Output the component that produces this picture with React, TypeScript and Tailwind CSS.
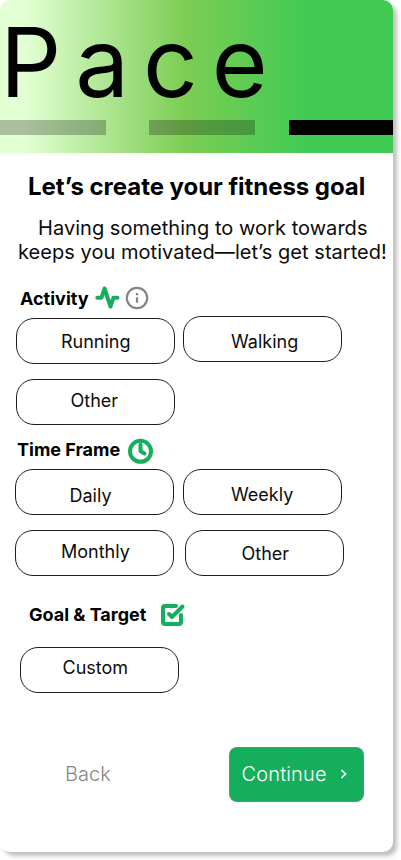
/**
 * Goal setup – last step of the Pace onboarding
 */
import type { ReactNode } from "react";
import clsx from "clsx";

function Pill({ children, className }: { children: ReactNode; className?: string }) {
  return (
    <button
      className={clsx(
        "flex items-start w-[159px] h-[46px] shrink-0 rounded-[18px] border border-[#1e1e1e] bg-white text-[18px] leading-[22px] text-[#0c0c0c]",
        className,
      )}
    >
      {children}
    </button>
  );
}

function ActivityIcon() {
  return (
    <svg className="w-6 h-6 shrink-0 overflow-visible" viewBox="0 0 24 24" fill="none" stroke="#14AE5C" strokeWidth="4" strokeLinecap="round" strokeLinejoin="round">
      <path d="M22.5 11.7h-4l-3 9L9.5 2.5l-3 9.2H2.3" />
    </svg>
  );
}

function InfoIcon() {
  return (
    <svg className="w-6 h-6 shrink-0" viewBox="0 0 24 24" fill="none" stroke="#868686" strokeWidth="2.2">
      <circle cx="12" cy="12" r="10.2" />
      <path d="M12 16.7v-5.4M12 9.3V7" />
    </svg>
  );
}

function ClockIcon() {
  return (
    <svg className="w-[26px] h-[26px] shrink-0" viewBox="0 0 26 26" fill="none" stroke="#14AE5C" strokeWidth="4" strokeLinecap="round" strokeLinejoin="round">
      <circle cx="12.5" cy="13.3" r="10.5" />
      <path d="M12.5 6.8v6.5l4 2.2" />
    </svg>
  );
}

function CheckSquareIcon() {
  return (
    <svg className="w-6 h-6 shrink-0 overflow-visible" viewBox="0 0 24 24" fill="none" stroke="#14AE5C" strokeWidth="4" strokeLinecap="round" strokeLinejoin="round">
      <path d="M9 11l3 3L22.5 3.5" />
      <path d="M21 12v7a2 2 0 0 1-2 2H5a2 2 0 0 1-2-2V5a2 2 0 0 1 2-2h11" />
    </svg>
  );
}

export default function App() {
  return (
    <div className="w-[401px] h-[860px] overflow-hidden bg-white font-['Inter',sans-serif] text-black">
      <div className="w-[393px] h-[852px] flex flex-col overflow-hidden rounded-[10px] bg-white shadow-[4px_4px_4px_rgba(0,0,0,0.25)]">
        {/* Brand header with step progress */}
        <header className="h-[153px] shrink-0 bg-[linear-gradient(90deg,#e3ffd4_6%,#7ccd54_47%,#40ca53_79%)]">
          <h1 className="h-[120px] pt-1 whitespace-nowrap text-[96px] leading-[116px] tracking-[13.9px]">Pace</h1>
          <div className="flex h-[15px]">
            <span className="w-[106px] bg-black/25" />
            <span className="ml-[43px] w-[106px] bg-black/25" />
            <span className="ml-[34px] w-[104px] bg-black" />
          </div>
        </header>

        <h2 className="mt-[19px] pl-[28px] whitespace-nowrap text-2xl leading-[29px] font-bold tracking-[-0.05px]">Let’s create your fitness goal</h2>
        <p className="mt-[15px] -mr-4 whitespace-nowrap text-xl leading-6 tracking-[0.04px] text-[#0c0c0c]">
          <span className="block pl-[38px]">Having something to work towards</span>
          <span className="block pl-[18px]">keeps you motivated—let’s get started!</span>
        </p>

        {/* Activity */}
        <div className="mt-[22px] flex h-6 items-center pl-5">
          <h3 className="pt-px text-[18px] leading-[22px] font-bold">Activity</h3>
          <span className="ml-[6px] flex gap-[6px]">
            <ActivityIcon />
            <InfoIcon />
          </span>
        </div>
        <div className="mt-[6px] flex items-end gap-2 pl-4">
          <Pill className="pl-[44px] pt-[12px]">Running</Pill>
          <Pill className="mb-[2px] pl-[47px] pt-[14px]">Walking</Pill>
        </div>
        <div className="mt-[15px] pl-4">
          <Pill className="pl-[53.5px] pt-[10px]">Other</Pill>
        </div>

        {/* Time frame */}
        <div className="mt-[13px] flex h-[26px] items-center pl-[17px]">
          <h3 className="pb-0.5 text-[18px] leading-[22px] font-bold">Time Frame</h3>
          <span className="ml-[8px]">
            <ClockIcon />
          </span>
        </div>
        <div className="mt-[5px] flex gap-[9px] pl-[15px]">
          <Pill className="pl-[53.5px] pt-[15px]">Daily</Pill>
          <Pill className="pl-[47px] pt-[14px]">Weekly</Pill>
        </div>
        <div className="mt-[15px] flex gap-[11px] pl-[15px]">
          <Pill className="pl-[45px] pt-[10px]">Monthly</Pill>
          <Pill className="pl-[55.5px] pt-[12px]">Other</Pill>
        </div>

        {/* Goal & target */}
        <div className="mt-[27px] flex h-6 items-center pl-[29px]">
          <h3 className="text-[18px] leading-[22px] font-bold">Goal &amp; Target</h3>
          <span className="ml-[14px]">
            <CheckSquareIcon />
          </span>
        </div>
        <div className="mt-5 pl-5">
          <Pill className="pl-[41.5px] pt-[9px]">Custom</Pill>
        </div>

        <footer className="mt-[54px] flex items-center justify-between pl-[65px] pr-[29px]">
          <button className="pb-0.5 text-xl leading-6 font-light text-[#868686]">Back</button>
          <button className="flex h-[55px] w-[135px] items-center rounded-lg border border-[#868686]/70 bg-[#14ae5c] pl-[11.5px] pb-0.5 text-xl font-light tracking-[0.15px] text-white">
            Continue
            <svg className="ml-[13px] w-2 h-[10px]" viewBox="0 0 8 10" fill="none" stroke="white" strokeWidth="1.7">
              <path d="M1.5 1l4 4-4 4" />
            </svg>
          </button>
        </footer>
      </div>
    </div>
  );
}
